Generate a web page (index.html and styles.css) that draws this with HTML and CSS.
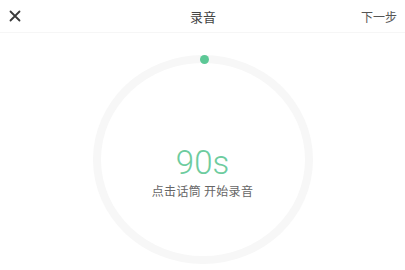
FILE: index.html
```html
<!DOCTYPE html>
<html>
<head>
  <meta charset="UTF-8">
  <title>录音</title>
  <link rel="stylesheet" href="styles.css">
</head>
<body>
  <div class="top-bar">
    <span class="close-btn">
      <svg width="12" height="12" viewBox="0 0 12 12">
        <path d="M1.5 1.5 L10.5 10.5 M10.5 1.5 L1.5 10.5" stroke="#3a3a3a" stroke-width="1.8" stroke-linecap="round"/>
      </svg>
    </span>
    <span class="title">录音</span>
    <span class="next-btn">下一步</span>
  </div>

  <div class="record-area">
    <div class="ring">
      <span class="ring-dot"></span>
      <div class="timer">90s</div>
      <div class="hint">点击话筒 开始录音</div>
    </div>
  </div>
</body>
</html>
```

FILE: styles.css
```css
body {
  margin: 0;
  width: 405px;
  height: 270px;
  overflow: hidden;
  background: #ffffff;
  font-family: "Noto Sans CJK SC", Roboto, sans-serif;
  color: #333333;
}

.top-bar {
  display: flex;
  align-items: center;
  justify-content: space-between;
  height: 32px;
  padding: 0 8px 0 9px;
  border-bottom: 1px solid #f6f6f6;
}

.close-btn {
  display: flex;
  width: 40px;
}

.title {
  font-size: 13px;
  color: #444444;
}

.next-btn {
  width: 40px;
  text-align: right;
  font-size: 12px;
  color: #555555;
}

.record-area {
  display: flex;
  justify-content: center;
  padding-top: 22px;
}

.ring {
  position: relative;
  box-sizing: border-box;
  width: 220px;
  height: 209px;
  border: 8px solid #f7f7f7;
  border-radius: 50%;
  display: flex;
  flex-direction: column;
  align-items: center;
  justify-content: center;
  padding-top: 26px;
}

.ring-dot {
  position: absolute;
  top: -8px;
  left: 50%;
  width: 9px;
  height: 9px;
  margin-left: -2.5px;
  border-radius: 50%;
  background: #5cc896;
}

.timer {
  font-family: Roboto, sans-serif;
  font-weight: 300;
  font-size: 33px;
  line-height: 34px;
  color: #6dcc9e;
}

.hint {
  margin-top: 2px;
  font-size: 12px;
  letter-spacing: 0.3px;
  color: #666666;
}
```
